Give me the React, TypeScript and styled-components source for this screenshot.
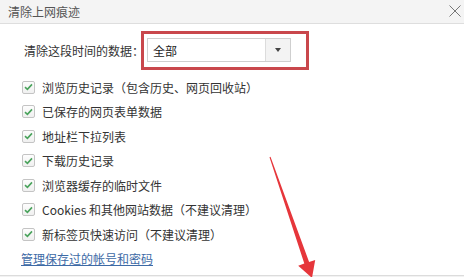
import React from "react";
import styled, { createGlobalStyle } from "styled-components";

const Global = createGlobalStyle`
  html, body { margin: 0; padding: 0; background: #fff; }
  body { font-family: "Microsoft YaHei", "Noto Sans CJK SC", "Noto Sans", sans-serif; }
`;

const Dialog = styled.div`
  position: relative;
  width: 464px;
  height: 277px;
  overflow: hidden;
  background: #fff;
  display: flex;
  flex-direction: column;
`;

const TitleBar = styled.div`
  height: 23px;
  flex: none;
  display: flex;
  align-items: center;
  justify-content: space-between;
  padding: 0 2px 0 8px;
  background: #f4f4f4;
  border-bottom: 1px solid #dedede;
  color: #555;
  font-size: 12px;
`;

const CloseBtn = styled.div`
  width: 14px;
  height: 14px;
  display: flex;
  align-items: center;
  justify-content: center;
  margin-top: -2px;
`;

const Content = styled.div`
  padding-left: 22px;
  font-size: 12px;
  color: #333;
`;

const TimeRow = styled.div`
  display: flex;
  align-items: center;
  margin-top: 7px;
`;

const TimeLabel = styled.span`
  width: 119px;
  padding-left: 2px;
  box-sizing: border-box;
  white-space: nowrap;
`;

const Highlight = styled.div`
  border: 3px solid #c9474c;
  padding: 4px 15px 5px 3px;
`;

const Select = styled.div`
  width: 144px;
  height: 24px;
  box-sizing: border-box;
  border: 1px solid #cfcfcf;
  display: flex;
  align-items: stretch;
  background: #fff;
`;

const SelectValue = styled.span`
  flex: 1;
  display: flex;
  align-items: center;
  padding-left: 5px;
  color: #222;
`;

const SelectButton = styled.span`
  width: 24px;
  border-left: 1px solid #dcdcdc;
  background: #f3f3f3;
  display: flex;
  align-items: center;
  justify-content: center;
  &::after {
    content: "";
    border-left: 3.5px solid transparent;
    border-right: 3.5px solid transparent;
    border-top: 4px solid #444;
  }
`;

const List = styled.div`
  margin-top: 5px;
  display: flex;
  flex-direction: column;
`;

const Row = styled.label`
  height: 24.5px;
  display: flex;
  align-items: center;
  gap: 7px;
  white-space: nowrap;
`;

const Box = styled.span`
  width: 13px;
  height: 13px;
  box-sizing: border-box;
  border: 1px solid #c4c4c4;
  border-radius: 2px;
  background: linear-gradient(#fdfdfd, #f0f0f0);
  display: flex;
  align-items: center;
  justify-content: center;
`;

const LinkRow = styled.div`
  height: 24.5px;
  display: flex;
  align-items: center;
  margin-left: -1px;
`;

const Link = styled.a`
  color: #3d6aa6;
  text-decoration: underline;
  font-size: 12px;
`;

const Footer = styled.div`
  margin-top: 4px;
  flex: 1;
  border-top: 1px solid #dcdcdc;
  background: #f2f2f2;
`;

const Arrow = styled.svg`
  position: absolute;
  left: 0;
  top: 0;
  pointer-events: none;
`;

const items = [
  "浏览历史记录（包含历史、网页回收站）",
  "已保存的网页表单数据",
  "地址栏下拉列表",
  "下载历史记录",
  "浏览器缓存的临时文件",
  "Cookies 和其他网站数据（不建议清理）",
  "新标签页快速访问（不建议清理）",
];

const Check = () => (
  <svg width="9" height="8" viewBox="0 0 9 8">
    <path d="M1 4.2 L3.4 6.4 L8 1.4" fill="none" stroke="#4aa35c" strokeWidth="1.6" />
  </svg>
);

export default function App() {
  return (
    <>
      <Global />
      <Dialog>
        <TitleBar>
          <span>清除上网痕迹</span>
          <CloseBtn>
            <svg width="12" height="12" viewBox="0 0 12 12">
              <path d="M0.5 0.5 L11.5 11.5 M11.5 0.5 L0.5 11.5" stroke="#777" strokeWidth="1" fill="none" />
            </svg>
          </CloseBtn>
        </TitleBar>
        <Content>
          <TimeRow>
            <TimeLabel>清除这段时间的数据：</TimeLabel>
            <Highlight>
              <Select>
                <SelectValue>全部</SelectValue>
                <SelectButton />
              </Select>
            </Highlight>
          </TimeRow>
          <List>
            {items.map((t) => (
              <Row key={t}>
                <Box>
                  <Check />
                </Box>
                <span>{t}</span>
              </Row>
            ))}
            <LinkRow>
              <Link>管理保存过的帐号和密码</Link>
            </LinkRow>
          </List>
        </Content>
        <Footer />
        <Arrow width="464" height="277" viewBox="0 0 464 277">
          <polygon
            points="269.5,157.2 270.5,156.8 309.1,262.0 315.2,259.9 312.0,277.9 298.2,265.8 304.3,263.6"
            fill="#e6363b"
          />
        </Arrow>
      </Dialog>
    </>
  );
}
